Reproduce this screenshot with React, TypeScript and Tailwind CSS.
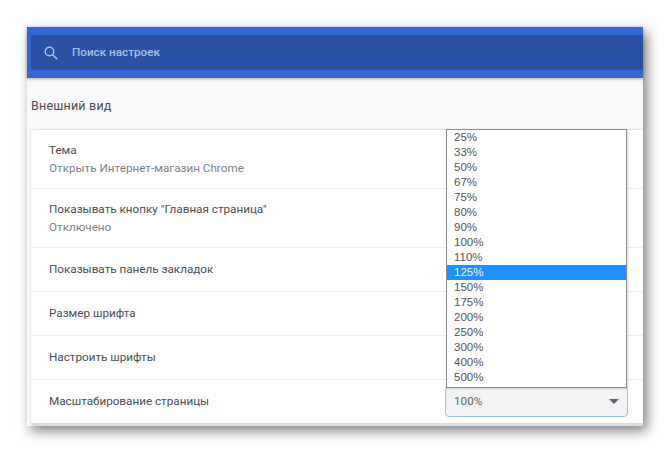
import React from "react";

const zooms = ["25%","33%","50%","67%","75%","80%","90%","100%","110%","125%","150%","175%","200%","250%","300%","400%","500%"];

function Row({ title, sub, h, last }: { title: string; sub?: string; h: string; last?: boolean }) {
  return (
    <div className={`${h} flex flex-col justify-center pl-[18px] ${sub ? "" : "pb-[2px]"} ${last ? "" : "border-b border-[#eceef0]"}`}>
      <div className="text-[11.7px] leading-[18px] text-[#4a4d51]">{title}</div>
      {sub && <div className="text-[11.7px] leading-[18px] text-[#7d8185]">{sub}</div>}
    </div>
  );
}

export default function App() {
  return (
    <div className="w-[670px] h-[454px] bg-white pt-[27px] pl-[27px] overflow-hidden font-['Roboto',sans-serif]">
      <div className="w-[616px] h-[399px] bg-[#f8f9fa] shadow-[4px_5px_12px_rgba(0,0,0,0.5)] flex flex-col">
        <div className="h-[51px] shrink-0 bg-[#3367d6] pt-[8px] pl-[4px] shadow-[0_1px_3px_rgba(0,0,0,0.3)]">
          <div className="h-[35px] bg-[#2a4fa3] flex items-center pl-[13px]">
            <svg width="14" height="14" viewBox="0 0 14 14" fill="none" stroke="#b5c8ee" strokeWidth="1.4">
              <circle cx="5.5" cy="5.5" r="4.3" />
              <path d="M8.7 8.7l4.6 4.6" />
            </svg>
            <span className="ml-[14px] text-[11.7px] font-medium text-[#a9bfe9]">Поиск настроек</span>
          </div>
        </div>
        <div className="pl-[4px] pt-[19px] flex-1 flex flex-col">
          <div className="h-[32px] text-[12.5px] leading-[18px] text-[#4a4d51] tracking-[0.2px]">Внешний вид</div>
          <div className="relative h-[297px] bg-white rounded-l-[4px] border-t border-[#e3e5e8] border-b-[3px] border-b-[#d9dbdd] shadow-[-1px_0_1px_rgba(0,0,0,0.08)]">
            <Row title="Тема" sub="Открыть Интернет-магазин Chrome" h="h-[59px]" />
            <Row title={'Показывать кнопку "Главная страница"'} sub="Отключено" h="h-[59px]" />
            <Row title="Показывать панель закладок" h="h-[44px]" />
            <Row title="Размер шрифта" h="h-[44px]" />
            <Row title="Настроить шрифты" h="h-[44px]" />
            <Row title="Масштабирование страницы" h="h-[43px]" last />
            <div className="absolute left-[414px] top-[256px] w-[183px] h-[31px] bg-[#f1f3f4] border-[1.5px] border-[#98bdf3] rounded-[4px] flex items-center justify-between pl-[8px] pr-[8px] text-[11.7px] text-[#5f6368]">
              <span>100%</span>
              <svg width="10" height="5" viewBox="0 0 10 5"><path d="M0 0h10L5 5z" fill="#5f6368" /></svg>
            </div>
            <div className="absolute left-[415px] top-[-1px] w-[181px] h-[259px] bg-white border border-[#8a8a8a] font-['Liberation_Sans',sans-serif] text-[11.5px] text-[#555555] shadow-[1px_1px_2px_rgba(0,0,0,0.15)]">
              {zooms.map((z) => (
                <div key={z} className={`h-[15px] leading-[15px] pl-[7px] ${z === "125%" ? "bg-[#1e90ff] text-[#e8f4ff]" : ""}`}>{z}</div>
              ))}
            </div>
          </div>
        </div>
      </div>
    </div>
  );
}
